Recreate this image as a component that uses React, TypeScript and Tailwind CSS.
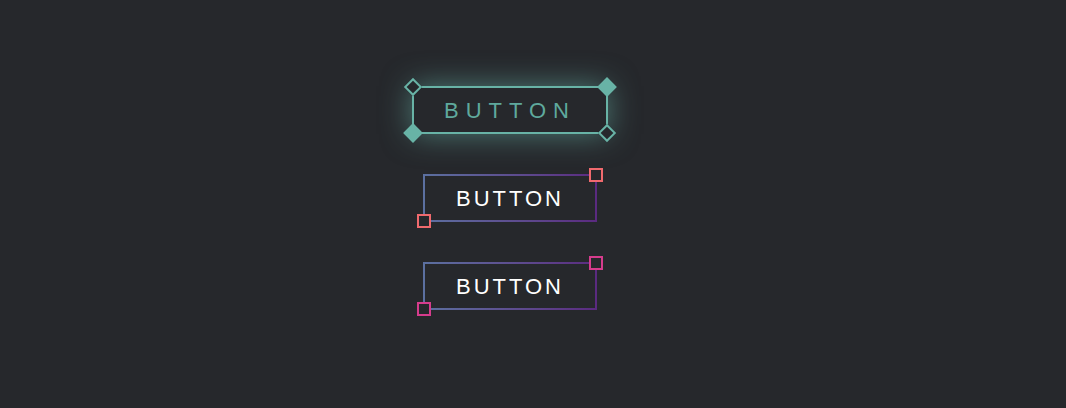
import React from 'react';

const font = { fontFamily: '"Liberation Sans", Arial, sans-serif' };

function GlowButton() {
  return (
    <div className="relative flex h-[48px] w-[196px] items-center justify-center border-2 border-[#68b3a6] bg-[#26282c] shadow-[0_0_30px_rgba(104,179,166,0.6)]">
      <span className="text-[22px] tracking-[7px] text-[#5fa99d]" style={font}>
        BUTTON
      </span>
      {/* corner diamonds */}
      <span className="absolute left-[-1px] top-[-1px] h-[13px] w-[13px] -translate-x-1/2 -translate-y-1/2 rotate-45 border-2 border-[#68b3a6] bg-[#26282c]" />
      <span className="absolute right-[-1px] top-[-1px] h-[14px] w-[14px] translate-x-1/2 -translate-y-1/2 rotate-45 bg-[#68b3a6]" />
      <span className="absolute bottom-[-1px] left-[-1px] h-[14px] w-[14px] -translate-x-1/2 translate-y-1/2 rotate-45 bg-[#68b3a6]" />
      <span className="absolute bottom-[-1px] right-[-1px] h-[13px] w-[13px] translate-x-1/2 translate-y-1/2 rotate-45 border-2 border-[#68b3a6] bg-[#26282c]" />
    </div>
  );
}

function GradientButton({ accent }: { accent: 'salmon' | 'pink' }) {
  const sq = accent === 'salmon' ? 'border-[#f06a6e]' : 'border-[#d63c8d]';
  return (
    <div className="relative h-[48px] w-[174px] bg-linear-to-r from-[#5b70a0] to-[#5a2a80] p-[2px]">
      <div className="flex h-full w-full items-center justify-center bg-[#26282c]">
        <span className="text-[22px] tracking-[3px] text-white" style={font}>
          BUTTON
        </span>
      </div>
      <span className={`absolute right-[1px] top-[1px] h-[14px] w-[14px] translate-x-1/2 -translate-y-1/2 border-2 bg-[#26282c] ${sq}`} />
      <span className={`absolute bottom-[1px] left-[1px] h-[14px] w-[14px] -translate-x-1/2 translate-y-1/2 border-2 bg-[#26282c] ${sq}`} />
    </div>
  );
}

export default function App() {
  return (
    <div className="flex h-[408px] w-full flex-col items-center gap-[40px] bg-[#26282c] pr-[46px] pt-[86px]">
      <GlowButton />
      <GradientButton accent="salmon" />
      <GradientButton accent="pink" />
    </div>
  );
}
